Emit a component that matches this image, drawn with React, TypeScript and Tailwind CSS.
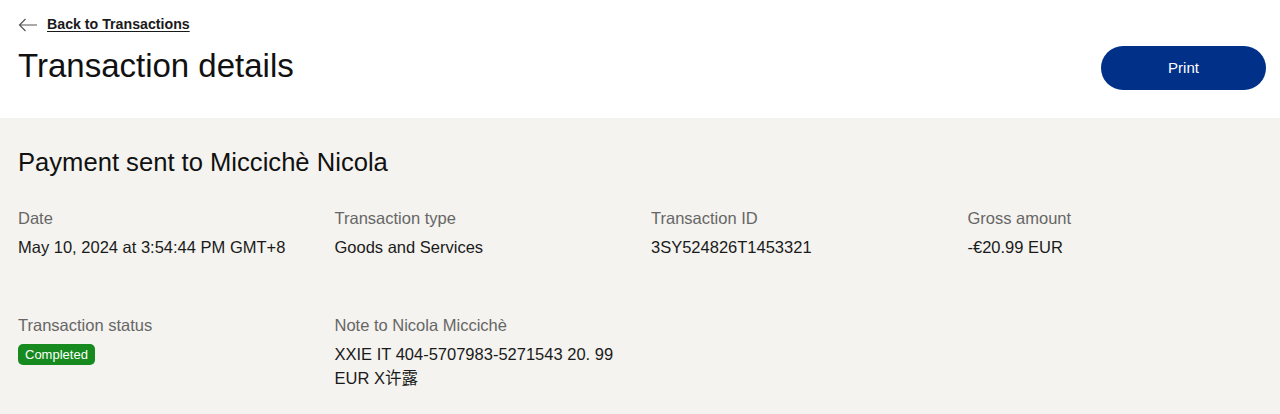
import React from "react";

const Field = ({ label, children }: { label: string; children: React.ReactNode }) => (
  <div>
    <div className="text-[16.5px] leading-6 text-[#666666]">{label}</div>
    <div className="mt-[5px] text-[16.5px] leading-6 text-[#1a1a1a]">{children}</div>
  </div>
);

const App = () => {
  return (
    <div
      className="min-h-[414px] bg-[#f4f3ef]"
      style={{ fontFamily: '"Liberation Sans", "Noto Sans CJK SC", sans-serif' }}
    >
      <div className="bg-white px-[18px] pt-[14px] pb-[28px] flex justify-between">
        <div>
          <a href="#" className="flex items-center gap-[9px] text-[#1a1a1a]">
            <svg width="20" height="14" viewBox="0 0 20 14" fill="none" stroke="#555" strokeWidth="1.2">
              <path d="M19 7H1.5M7.5 1L1.5 7l6 6" />
            </svg>
            <span className="text-[14.2px] font-bold underline underline-offset-2">Back to Transactions</span>
          </a>
          <h1 className="mt-[10px] text-[33px] leading-[42px] text-[#111]">Transaction details</h1>
        </div>
        <button className="mt-[32px] mr-[-4px] h-[44px] w-[165px] rounded-full bg-[#003087] text-[15px] text-white">
          Print
        </button>
      </div>
      <div className="px-[18px] pt-[28px] pb-6">
        <h2 className="text-[25.6px] leading-8 text-[#111]">Payment sent to Miccichè Nicola</h2>
        <div className="mt-[28px] grid grid-cols-4 gap-x-[22px] gap-y-[54px]">
          <Field label="Date">May 10, 2024 at 3:54:44 PM GMT+8</Field>
          <Field label="Transaction type">Goods and Services</Field>
          <Field label="Transaction ID">3SY524826T1453321</Field>
          <Field label="Gross amount">-€20.99 EUR</Field>
          <div>
            <div className="text-[16.5px] leading-6 text-[#666666]">Transaction status</div>
            <span className="mt-[7px] inline-block rounded-[5px] bg-[#168a1e] px-[7px] text-[13px] leading-[21px] text-white">
              Completed
            </span>
          </div>
          <Field label="Note to Nicola Miccichè">XXIE IT 404-5707983-5271543 20. 99 EUR X许露</Field>
        </div>
      </div>
    </div>
  );
};

export default App;
